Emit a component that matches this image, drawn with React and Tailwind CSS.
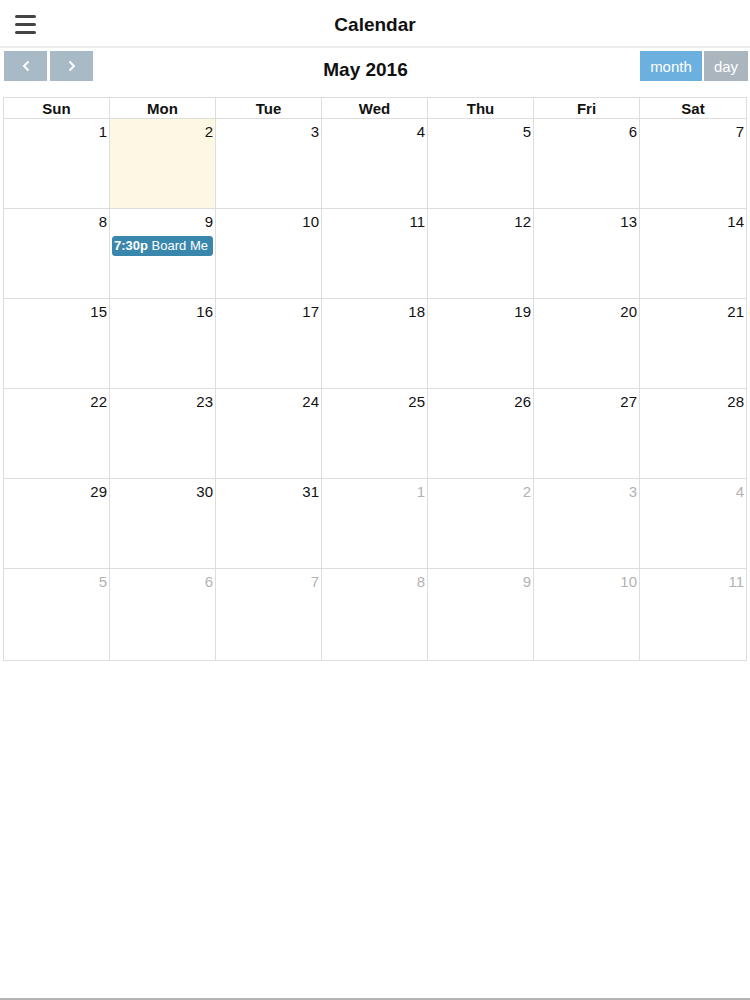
import React from "react";

const days = ["Sun", "Mon", "Tue", "Wed", "Thu", "Fri", "Sat"];

// 6 weeks starting Sun May 1 2016
const weeks = [];
for (let w = 0; w < 6; w++) {
  const row = [];
  for (let d = 0; d < 7; d++) {
    const n = w * 7 + d + 1;
    row.push(n <= 31 ? { n, other: false } : { n: n - 31, other: true });
  }
  weeks.push(row);
}

const Calendar = () => {
  return (
    <div
      className="h-[1000px] w-[750px] bg-white flex flex-col border-b-2 border-[#b3b3b3]"
      style={{ fontFamily: '"Liberation Sans", Arial, sans-serif' }}
    >
      {/* Top bar */}
      <header className="relative h-[48px] border-b-2 border-[#ececec] flex items-center justify-center">
        <button className="absolute left-[15px] top-[15px] flex flex-col gap-[5px]">
          <span className="block w-[21px] h-[3px] bg-[#444] rounded-sm" />
          <span className="block w-[21px] h-[3px] bg-[#444] rounded-sm" />
          <span className="block w-[21px] h-[3px] bg-[#444] rounded-sm" />
        </button>
        <h1 className="text-[19px] font-bold text-[#111] mt-[5px]">Calendar</h1>
      </header>

      {/* Toolbar */}
      <div className="flex items-center justify-between px-[4px] pt-[2px] h-[49px]">
        <div className="flex gap-[3px] mt-[-15px]">
          <button className="w-[43px] h-[30px] bg-[#a8bac6] flex items-center justify-center">
            <svg width="12" height="14" viewBox="0 0 12 14">
              <path d="M8.5 2.5 L4 7 L8.5 11.5" fill="none" stroke="#fff" strokeWidth="2" />
            </svg>
          </button>
          <button className="w-[43px] h-[30px] bg-[#a8bac6] flex items-center justify-center">
            <svg width="12" height="14" viewBox="0 0 12 14">
              <path d="M3.5 2.5 L8 7 L3.5 11.5" fill="none" stroke="#fff" strokeWidth="2" />
            </svg>
          </button>
        </div>
        <h2 className="text-[19px] font-bold text-[#111] mt-[-6px] ml-[-2px]">May 2016</h2>
        <div className="flex gap-[2px] mt-[-15px] mr-[-2px]">
          <button className="w-[62px] h-[30px] bg-[#6cb0e0] text-white text-[15px] pt-[2px]">month</button>
          <button className="w-[44px] h-[30px] bg-[#aab5be] text-white text-[15px] pt-[2px]">day</button>
        </div>
      </div>

      {/* Month grid */}
      <div className="mx-[3px] w-[744px] border border-[#dddddd]">
        <div className="grid grid-cols-7 h-[21px] border-b border-[#dddddd]">
          {days.map((d, i) => (
            <div
              key={d}
              className={`text-center text-[15px] font-bold text-[#111] leading-[21px] ${i < 6 ? "border-r border-[#dddddd]" : ""}`}
            >
              {d}
            </div>
          ))}
        </div>
        {weeks.map((row, w) => (
          <div
            key={w}
            className={`grid grid-cols-7 ${w < 5 ? "h-[90px] border-b border-[#dddddd]" : "h-[91px]"}`}
          >
            {row.map((c, i) => (
              <div
                key={i}
                className={`relative ${i < 6 ? "border-r border-[#dddddd]" : ""} ${
                  !c.other && c.n === 2 ? "bg-[#fcf8e3]" : ""
                }`}
              >
                <div
                  className={`text-right pr-[2px] pt-[4px] text-[15px] leading-[18px] ${
                    c.other ? "text-[#b3b3b3]" : "text-[#111]"
                  }`}
                >
                  {c.n}
                </div>
                {!c.other && c.n === 9 && (
                  <div className="mx-[2px] mt-[5px] h-[20px] bg-[#3a87ad] border border-[#3a87ad] rounded-[3px] text-white text-[13px] leading-[18px] px-[1px] whitespace-nowrap overflow-hidden">
                    <span className="font-bold">7:30p</span> Board Me
                  </div>
                )}
              </div>
            ))}
          </div>
        ))}
      </div>
      <div className="flex-1" />
    </div>
  );
};

export default function App() {
  return <Calendar />;
}
